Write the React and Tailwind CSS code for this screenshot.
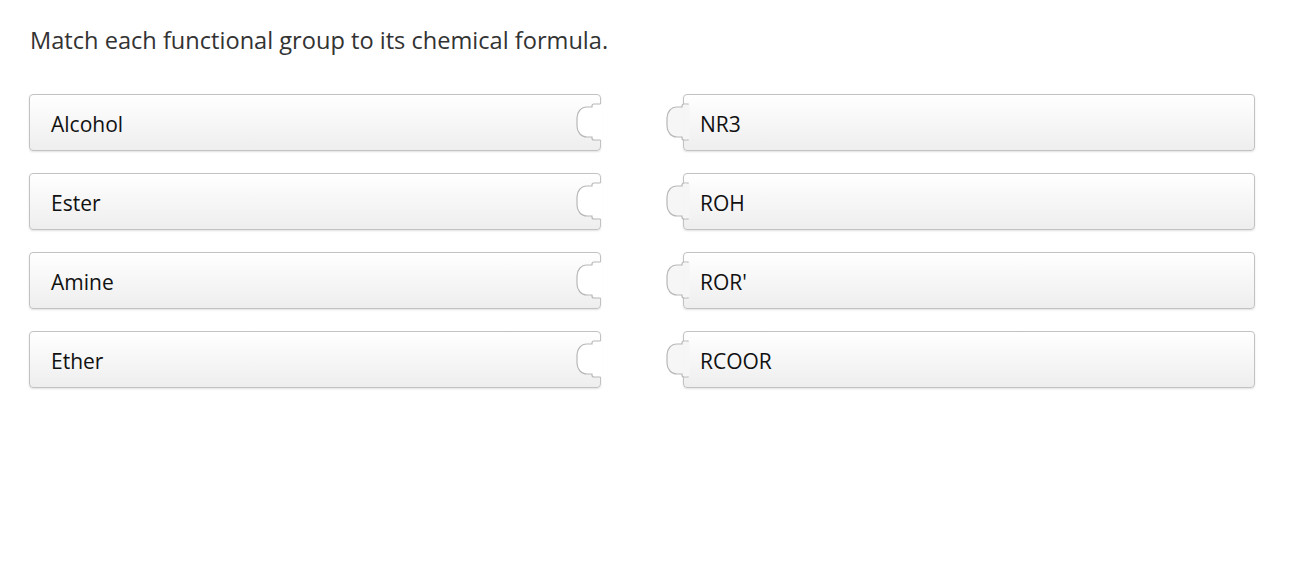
const groups = ["Alcohol", "Ester", "Amine", "Ether"];
const formulas = ["NR3", "ROH", "ROR'", "RCOOR"];

const font = { fontFamily: '"Open Sans", "Noto Sans", sans-serif' };

const curve =
  "L23,10 Q21,10 21,12 L21,13 L16,13 C10,13 6,18 6,24 L6,32 C6,38 10,43 16,43 L21,43 L21,44 Q21,46 23,46";

// notch cut into the right edge of a left-hand card
const Notch = () => (
  <svg
    className="absolute top-[-1px] right-[-1px] h-[57px] w-[30px] overflow-visible"
    viewBox="0 0 30 57"
  >
    <path d={"M31,10 L30,10 " + curve + " L30,46 L31,46 Z"} fill="#ffffff" />
    <path
      d={"M29.5,10 " + curve + " L29.5,46"}
      fill="none"
      stroke="#b8b8b8"
      strokeWidth="1.2"
    />
  </svg>
);

// tab sticking out of the left edge of a right-hand card
const Tab = () => (
  <svg
    className="absolute top-[-1px] left-[-26px] h-[57px] w-[30px] overflow-visible"
    viewBox="0 0 30 57"
  >
    <path
      d="M30,10 L26,10 Q24,10 24,12 L24,13 L19,13 C13,13 9,18 9,24 L9,32 C9,38 13,43 19,43 L24,43 L24,44 Q24,46 26,46 L30,46 Z"
      fill="#f6f6f6"
      stroke="#b8b8b8"
      strokeWidth="1.2"
    />
    <rect x="26.6" y="10.7" width="5" height="34.6" fill="#f6f6f6" />
  </svg>
);

const Card = ({ label, side }) => (
  <div className="relative h-[57px] rounded-[4px] border border-[#c2c2c2] bg-gradient-to-b from-white to-[#eeeeee] shadow-[0_1px_2px_rgba(0,0,0,0.12)]">
    {side === "left" ? <Notch /> : <Tab />}
    <div
      className={`relative flex h-full items-center pt-[4px] text-[21px] text-[#111] ${
        side === "left" ? "pl-[21px]" : "pl-[16px]"
      }`}
      style={font}
    >
      {label}
    </div>
  </div>
);

export default function App() {
  return (
    <div className="min-h-[574px] w-[1296px] bg-white" style={font}>
      <p className="pl-[30px] pt-[23px] text-[23.6px] text-[#333] leading-[34px]">
        Match each functional group to its chemical formula.
      </p>
      <div className="ml-[29px] mt-[37px] grid w-[1226px] grid-cols-2 gap-x-[82px] gap-y-[22px]">
        {groups.map((g, i) => [
          <Card key={"l" + i} label={g} side="left" />,
          <Card key={"r" + i} label={formulas[i]} side="right" />,
        ])}
      </div>
    </div>
  );
}
